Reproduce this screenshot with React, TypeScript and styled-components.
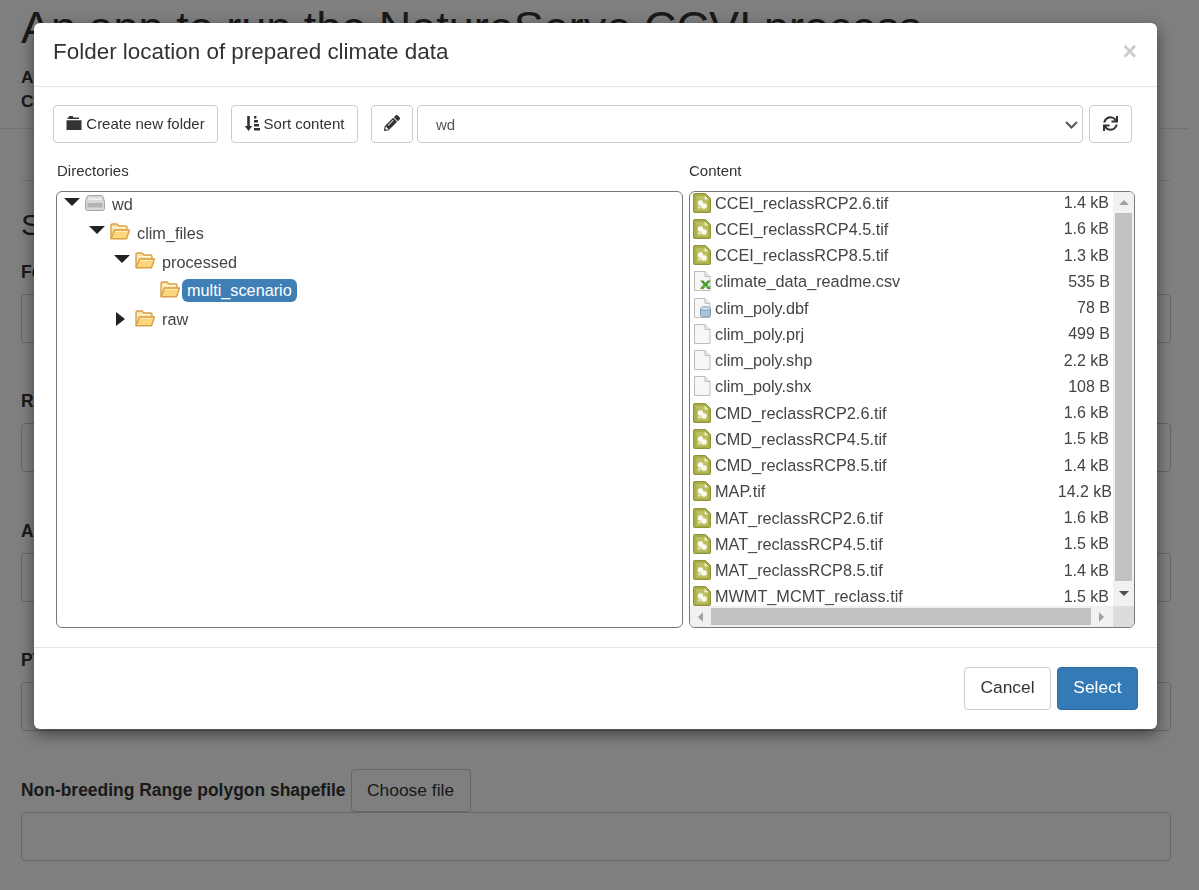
import styled, { createGlobalStyle } from "styled-components";
import { FaPencilAlt, FaSync } from "react-icons/fa";

const GlobalStyle = createGlobalStyle`
  html, body {
    margin: 0;
    height: 890px;
    overflow: hidden;
    background: #fff;
    color: #333;
    font-family: "Liberation Sans", Arial, sans-serif;
    font-size: 15px;
  }
  * {
    box-sizing: border-box;
  }
`;

/* Page behind the dialog */
const Page = styled.div`
  height: 890px;
  overflow: hidden;
`;

const PageHeader = styled.header`
  height: 129px;
  margin-right: 11px;
  padding: 0 21px;
  border-bottom: 1px solid #e5e5e5;
`;

const PageTitle = styled.h1`
  margin: 0;
  padding-top: 3px;
  font-size: 45px;
  font-weight: 400;
  line-height: 50px;
  white-space: nowrap;
`;

const Byline = styled.p`
  margin: 0;
  font-size: 17.4px;
  font-weight: 700;
  line-height: 24px;
  &:first-of-type {
    margin-top: 12px;
  }
`;

const PageBody = styled.main`
  padding: 0 28px 0 21px;
`;

const Rule = styled.hr`
  margin: 51px 0 0;
  border: 0;
  border-top: 1px solid #e5e5e5;
`;

const SectionTitle = styled.h2`
  margin: 25px 0 7px;
  font-size: 30px;
  font-weight: 400;
  line-height: 38px;
`;

const FieldBlock = styled.div`
  height: 129.4px;
`;

const FieldLabel = styled.div`
  display: flex;
  align-items: center;
  gap: 5px;
  height: 43px;
  font-size: 17.45px;
  font-weight: 700;
`;

const ChooseButton = styled.button`
  width: 120px;
  height: 43px;
  padding: 0;
  border: 1px solid #ccc;
  border-radius: 4px;
  background: #fff;
  color: #333;
  font: 400 17.4px "Liberation Sans", Arial, sans-serif;
`;

const FieldInput = styled.div`
  height: 49px;
  border: 1px solid #ccc;
  border-radius: 4px;
  background: #fff;
`;

/* Dialog */
const Backdrop = styled.div`
  position: fixed;
  inset: 0;
  background: rgba(0, 0, 0, 0.5);
`;

const Dialog = styled.section`
  position: fixed;
  top: 23px;
  left: 34px;
  width: 1123px;
  height: 706px;
  border-radius: 6px;
  background: #fff;
  box-shadow: 0 5px 15px rgba(0, 0, 0, 0.5);
  display: flex;
  flex-direction: column;
`;

const DialogHeader = styled.div`
  display: flex;
  align-items: center;
  justify-content: space-between;
  height: 64px;
  padding: 0 20px 5px 19px;
  border-bottom: 1px solid #e5e5e5;
`;

const DialogTitle = styled.h4`
  margin: 0;
  font-size: 22.45px;
  font-weight: 400;
  line-height: 1;
`;

const CloseMark = styled.span`
  margin-top: -1px;
  color: #000;
  opacity: 0.2;
  font-size: 25px;
  font-weight: 700;
  line-height: 1;
`;

const DialogBody = styled.div`
  flex: 1;
  padding: 18px 19px 19px;
`;

const Toolbar = styled.div`
  display: flex;
  align-items: center;
  padding-right: 6px;
`;

const ToolButton = styled.button<{ $width: number; $after: number }>`
  display: inline-flex;
  align-items: center;
  justify-content: center;
  gap: 4px;
  flex: none;
  width: ${(p) => p.$width}px;
  height: 38px;
  margin-right: ${(p) => p.$after}px;
  padding: 0 0 2px;
  border: 1px solid #ccc;
  border-radius: 4px;
  background: #fff;
  color: #333;
  font: 400 15px "Liberation Sans", Arial, sans-serif;
  svg {
    flex: none;
  }
`;

const SelectWrap = styled.div`
  position: relative;
  flex: 1;
  min-width: 0;
  height: 38px;
  margin-right: 6px;
`;

const RootSelect = styled.select`
  display: block;
  width: 100%;
  height: 38px;
  padding: 0 18px;
  border: 1px solid #ccc;
  border-radius: 4px;
  background: #fff;
  color: #555;
  font: 400 15px "Liberation Sans", Arial, sans-serif;
  appearance: none;
`;

const Chevron = styled.svg`
  position: absolute;
  top: 16px;
  right: 5px;
  pointer-events: none;
`;

const Panels = styled.div`
  display: grid;
  grid-template-columns: 627px 446px;
  column-gap: 6px;
  padding: 0 3px;
`;

const PanelLabel = styled.div<{ $inset?: number }>`
  height: 48px;
  padding: 18px 0 0 ${(p) => p.$inset ?? 0}px;
  font-size: 15px;
  line-height: 20px;
`;

const PanelBox = styled.div`
  height: 437px;
  border: 1px solid #777;
  border-radius: 6px;
  overflow: hidden;
`;

const Tree = styled(PanelBox)`
  display: flex;
  flex-direction: column;
  gap: 5.75px;
  padding: 1px 0 0 7px;
`;

const TreeRow = styled.div<{ $depth: number }>`
  display: flex;
  align-items: center;
  height: 23px;
  padding-left: ${(p) => p.$depth * 25}px;
  font-size: 16.25px;
  > svg {
    margin-top: -3px;
  }
`;

const Toggle = styled.span<{ $collapsed?: boolean }>`
  display: flex;
  flex: none;
  justify-content: flex-start;
  width: 21px;
  margin-top: ${(p) => (p.$collapsed ? "-1px" : "-6px")};
  padding-left: ${(p) => (p.$collapsed ? "2px" : "0")};
`;

const TreeLabel = styled.span<{ $selected?: boolean }>`
  margin-left: 2px;
  padding: 0 5px;
  border-radius: 6px;
  line-height: 23px;
  background: ${(p) => (p.$selected ? "#3f7fb5" : "transparent")};
  color: ${(p) => (p.$selected ? "#fff" : "#444")};
`;

const Browser = styled(PanelBox)`
  display: grid;
  grid-template-columns: 1fr 21px;
  grid-template-rows: 1fr 21px;
`;

const FileList = styled.div`
  min-width: 0;
  min-height: 0;
  overflow: hidden;
`;

const FileScroll = styled.div`
  margin-top: -2px;
`;

const FileRow = styled.div`
  display: flex;
  align-items: center;
  height: 26.25px;
  padding-left: 3px;
  font-size: 16.25px;
  color: #444;
  svg {
    flex: none;
    margin-top: -1px;
  }
`;

const FileName = styled.span`
  flex: 1;
  margin-left: 4px;
  white-space: nowrap;
`;

const FileSize = styled.span<{ $inset: number }>`
  padding-right: ${(p) => p.$inset}px;
  font-size: 16px;
  white-space: nowrap;
`;

const ScrollTrack = styled.div<{ $horizontal?: boolean }>`
  display: flex;
  flex-direction: ${(p) => (p.$horizontal ? "row" : "column")};
  align-items: center;
  background: #f1f1f1;
  padding: ${(p) => (p.$horizontal ? "0 0 0 8px" : "8px 0 0")};
`;

const arrowMargins = {
  up: "0 0 8px",
  down: "10px 0 0",
  left: "0 8px 0 0",
  right: "0 0 0 8px",
};

const arrowWidths = {
  up: "0 5px 5px",
  down: "5px 5px 0",
  left: "5px 5px 5px 0",
  right: "5px 0 5px 5px",
};

const arrowSides = { up: "bottom", down: "top", left: "right", right: "left" };

const ScrollArrow = styled.span<{ $dir: "up" | "down" | "left" | "right"; $on?: boolean }>`
  flex: none;
  width: 0;
  height: 0;
  margin: ${(p) => arrowMargins[p.$dir]};
  border-style: solid;
  border-color: transparent;
  border-width: ${(p) => arrowWidths[p.$dir]};
  border-${(p) => arrowSides[p.$dir]}-color: ${(p) => (p.$on ? "#505050" : "#a3a3a3")};
`;

const VerticalThumb = styled.div`
  flex: none;
  width: 17px;
  height: 368px;
  background: #c1c1c1;
`;

const HorizontalThumb = styled.div`
  flex: none;
  width: 380px;
  height: 17px;
  background: #c1c1c1;
`;

const ScrollCorner = styled.div`
  background: #dcdcdc;
`;

const DialogFooter = styled.div`
  display: flex;
  justify-content: flex-end;
  gap: 6px;
  height: 82px;
  padding: 19px;
  border-top: 1px solid #e5e5e5;
`;

const FooterButton = styled.button<{ $primary?: boolean; $width: number }>`
  width: ${(p) => p.$width}px;
  height: 43px;
  padding: 0 0 2px;
  border: 1px solid ${(p) => (p.$primary ? "#2e6da4" : "#ccc")};
  border-radius: 4px;
  background: ${(p) => (p.$primary ? "#337ab7" : "#fff")};
  color: ${(p) => (p.$primary ? "#fff" : "#333")};
  font: 400 17.4px "Liberation Sans", Arial, sans-serif;
`;

/* Drawn icons */
const FolderCloseIcon = () => (
  <svg width="16" height="14" viewBox="0 0 16 14">
    <path d="M3 0h4v1.5h6v1.6H1.5V1.5H3zM0.5 4.2h15V14H0.5z" fill="#333" />
  </svg>
);

const SortIcon = () => (
  <svg width="15" height="15" viewBox="0 0 15 15">
    <path d="M2.200 0h2.600v10H7.200L3.500 15 -0.200 10h2.400z" fill="#333" />
    <path d="M9 0h2.400v2.600H9zM9 4h4v2.600H9zM9 8h5v2.600H9zM9 12h6v2.600H9z" fill="#333" />
  </svg>
);

const TriangleDown = () => (
  <svg width="16" height="8" viewBox="0 0 16 8">
    <path d="M0 0h16L8 8z" fill="#222" />
  </svg>
);

const TriangleRight = () => (
  <svg width="9" height="14" viewBox="0 0 9 14">
    <path d="M0 0l9 7-9 7z" fill="#222" />
  </svg>
);

const DriveIcon = () => (
  <svg width="20" height="16" viewBox="0 0 20 16">
    <path d="M3.500 0.500h13a1.500 1.500 0 0 1 1.400 1l1.600 5v7a2 2 0 0 1-2 2h-15a2 2 0 0 1-2-2v-7l1.600-5a1.500 1.500 0 0 1 1.400-1z" fill="#d8d8d8" stroke="#a5a5a5" />
    <path d="M2.500 8h15v4.500h-15z" fill="#b3b3b3" />
    <path d="M3.500 3h13v2h-13z" fill="#efefef" />
  </svg>
);

const FolderOpenIcon = () => (
  <svg width="20" height="17" viewBox="0 0 20 17">
    <path d="M1 15.500V2.500a1.500 1.500 0 0 1 1.500-1.500h4.500l2 2h6.500a1.500 1.500 0 0 1 1.500 1.500V7" fill="#f9e3a8" stroke="#d9a048" strokeWidth="1.400" />
    <path d="M2.500 4.500h13" stroke="#fff6dc" />
    <path d="M1 15.800l3.500-8.800h15l-3 8.800z" fill="#fcd67c" stroke="#d9a048" strokeWidth="1.400" strokeLinejoin="round" />
    <path d="M5.500 8.500h12" stroke="#ffeebd" />
  </svg>
);

const RasterIcon = () => (
  <svg width="18" height="20" viewBox="0 0 18 20">
    <path d="M1.500 0.500h11l5 5v13a1 1 0 0 1-1 1h-15a1 1 0 0 1-1-1v-17a1 1 0 0 1 1-1z" fill="#a9ad45" stroke="#8f9338" />
    <path d="M3.500 3h8v3.500h3.500v11H3.500z" fill="#bcbf62" />
    <path d="M11.500 2.500l4 4h-4z" fill="#f2f3da" />
    <circle cx="7.500" cy="10" r="2.700" fill="#fbfbf0" />
    <circle cx="11" cy="13" r="2.800" fill="#fbfbf0" />
    <circle cx="6.500" cy="14" r="1.500" fill="#e4e6b8" />
  </svg>
);

const PaperShape = () => (
  <>
    <path d="M1.500 0.500h10.500l5 5v14h-15.500z" fill="#f7f7f7" stroke="#bdbdbd" />
    <path d="M12 0.500v5h5" fill="#e8e8e8" stroke="#bdbdbd" />
  </>
);

const PlainFileIcon = () => (
  <svg width="18" height="20" viewBox="0 0 18 20">
    <PaperShape />
  </svg>
);

const SheetFileIcon = () => (
  <svg width="20" height="20" viewBox="0 0 20 20" style={{ marginRight: "-2px" }}>
    <PaperShape />
    <path d="M7 9.500h3.500l2 2.500 2-2.500h3.500l-3.500 4 3.500 4.500h-3.500l-2-2.500-2 2.500H7l3.500-4.500z" fill="#4f9a2e" />
    <path d="M8 15h10v1H8z" fill="#7dbb5c" />
  </svg>
);

const TableFileIcon = () => (
  <svg width="18" height="20" viewBox="0 0 18 20">
    <PaperShape />
    <path d="M7.500 10.500v7c0 2 10 2 10 0v-7z" fill="#a9c3d8" stroke="#7f9cb5" />
    <ellipse cx="12.500" cy="10.500" rx="5" ry="1.800" fill="#d6e4ef" stroke="#7f9cb5" />
  </svg>
);

const fileIcons = {
  raster: <RasterIcon />,
  sheet: <SheetFileIcon />,
  table: <TableFileIcon />,
  plain: <PlainFileIcon />,
};

type FileEntry = { name: string; size: string; icon: keyof typeof fileIcons; inset: number };

const files: FileEntry[] = [
  { name: "CCEI_reclassRCP2.6.tif", size: "1.4 kB", icon: "raster", inset: 4 },
  { name: "CCEI_reclassRCP4.5.tif", size: "1.6 kB", icon: "raster", inset: 4 },
  { name: "CCEI_reclassRCP8.5.tif", size: "1.3 kB", icon: "raster", inset: 4 },
  { name: "climate_data_readme.csv", size: "535 B", icon: "sheet", inset: 3 },
  { name: "clim_poly.dbf", size: "78 B", icon: "table", inset: 3 },
  { name: "clim_poly.prj", size: "499 B", icon: "plain", inset: 3 },
  { name: "clim_poly.shp", size: "2.2 kB", icon: "plain", inset: 4 },
  { name: "clim_poly.shx", size: "108 B", icon: "plain", inset: 3 },
  { name: "CMD_reclassRCP2.6.tif", size: "1.6 kB", icon: "raster", inset: 4 },
  { name: "CMD_reclassRCP4.5.tif", size: "1.5 kB", icon: "raster", inset: 4 },
  { name: "CMD_reclassRCP8.5.tif", size: "1.4 kB", icon: "raster", inset: 4 },
  { name: "MAP.tif", size: "14.2 kB", icon: "raster", inset: 1 },
  { name: "MAT_reclassRCP2.6.tif", size: "1.6 kB", icon: "raster", inset: 4 },
  { name: "MAT_reclassRCP4.5.tif", size: "1.5 kB", icon: "raster", inset: 4 },
  { name: "MAT_reclassRCP8.5.tif", size: "1.4 kB", icon: "raster", inset: 4 },
  { name: "MWMT_MCMT_reclass.tif", size: "1.5 kB", icon: "raster", inset: 4 },
];

const fields = [
  "Folder location of prepared climate data",
  "Range polygon shapefile",
  "Assessment area polygon shapefile",
  "PTN polygon shapefile",
  "Non-breeding Range polygon shapefile",
];

const App = () => {
  return (
    <>
      <GlobalStyle />
      <Page>
        <PageHeader>
          <PageTitle>An app to run the NatureServe CCVI process</PageTitle>
          <Byline>Authors</Byline>
          <Byline>Contact</Byline>
        </PageHeader>
        <PageBody>
          <Rule />
          <SectionTitle>Species data</SectionTitle>
          {fields.map((field) => (
            <FieldBlock key={field}>
              <FieldLabel>
                {field}
                <ChooseButton>Choose file</ChooseButton>
              </FieldLabel>
              <FieldInput />
            </FieldBlock>
          ))}
        </PageBody>
      </Page>

      <Backdrop />
      <Dialog>
        <DialogHeader>
          <DialogTitle>Folder location of prepared climate data</DialogTitle>
          <CloseMark>×</CloseMark>
        </DialogHeader>
        <DialogBody>
          <Toolbar>
            <ToolButton $width={165} $after={13}>
              <FolderCloseIcon /> Create new folder
            </ToolButton>
            <ToolButton $width={127} $after={13}>
              <SortIcon /> Sort content
            </ToolButton>
            <ToolButton $width={42} $after={4}>
              <FaPencilAlt size={16} />
            </ToolButton>
            <SelectWrap>
              <RootSelect defaultValue="wd">
                <option value="wd">wd</option>
              </RootSelect>
              <Chevron width="13" height="8" viewBox="0 0 13 8">
                <path d="M1 1l5.500 5.500L12 1" fill="none" stroke="#555" strokeWidth="2" />
              </Chevron>
            </SelectWrap>
            <ToolButton $width={43} $after={0}>
              <FaSync size={15} />
            </ToolButton>
          </Toolbar>

          <Panels>
            <PanelLabel $inset={1}>Directories</PanelLabel>
            <PanelLabel>Content</PanelLabel>
            <Tree>
              <TreeRow $depth={0}>
                <Toggle><TriangleDown /></Toggle>
                <DriveIcon />
                <TreeLabel>wd</TreeLabel>
              </TreeRow>
              <TreeRow $depth={1}>
                <Toggle><TriangleDown /></Toggle>
                <FolderOpenIcon />
                <TreeLabel>clim_files</TreeLabel>
              </TreeRow>
              <TreeRow $depth={2}>
                <Toggle><TriangleDown /></Toggle>
                <FolderOpenIcon />
                <TreeLabel>processed</TreeLabel>
              </TreeRow>
              <TreeRow $depth={3}>
                <Toggle />
                <FolderOpenIcon />
                <TreeLabel $selected>multi_scenario</TreeLabel>
              </TreeRow>
              <TreeRow $depth={2}>
                <Toggle $collapsed><TriangleRight /></Toggle>
                <FolderOpenIcon />
                <TreeLabel>raw</TreeLabel>
              </TreeRow>
            </Tree>

            <Browser>
              <FileList>
                <FileScroll>
                  {files.map((file) => (
                    <FileRow key={file.name}>
                      {fileIcons[file.icon]}
                      <FileName>{file.name}</FileName>
                      <FileSize $inset={file.inset}>{file.size}</FileSize>
                    </FileRow>
                  ))}
                </FileScroll>
              </FileList>
              <ScrollTrack>
                <ScrollArrow $dir="up" />
                <VerticalThumb />
                <ScrollArrow $dir="down" $on />
              </ScrollTrack>
              <ScrollTrack $horizontal>
                <ScrollArrow $dir="left" />
                <HorizontalThumb />
                <ScrollArrow $dir="right" />
              </ScrollTrack>
              <ScrollCorner />
            </Browser>
          </Panels>
        </DialogBody>
        <DialogFooter>
          <FooterButton $width={87}>Cancel</FooterButton>
          <FooterButton $primary $width={81}>Select</FooterButton>
        </DialogFooter>
      </Dialog>
    </>
  );
};

export default App;
